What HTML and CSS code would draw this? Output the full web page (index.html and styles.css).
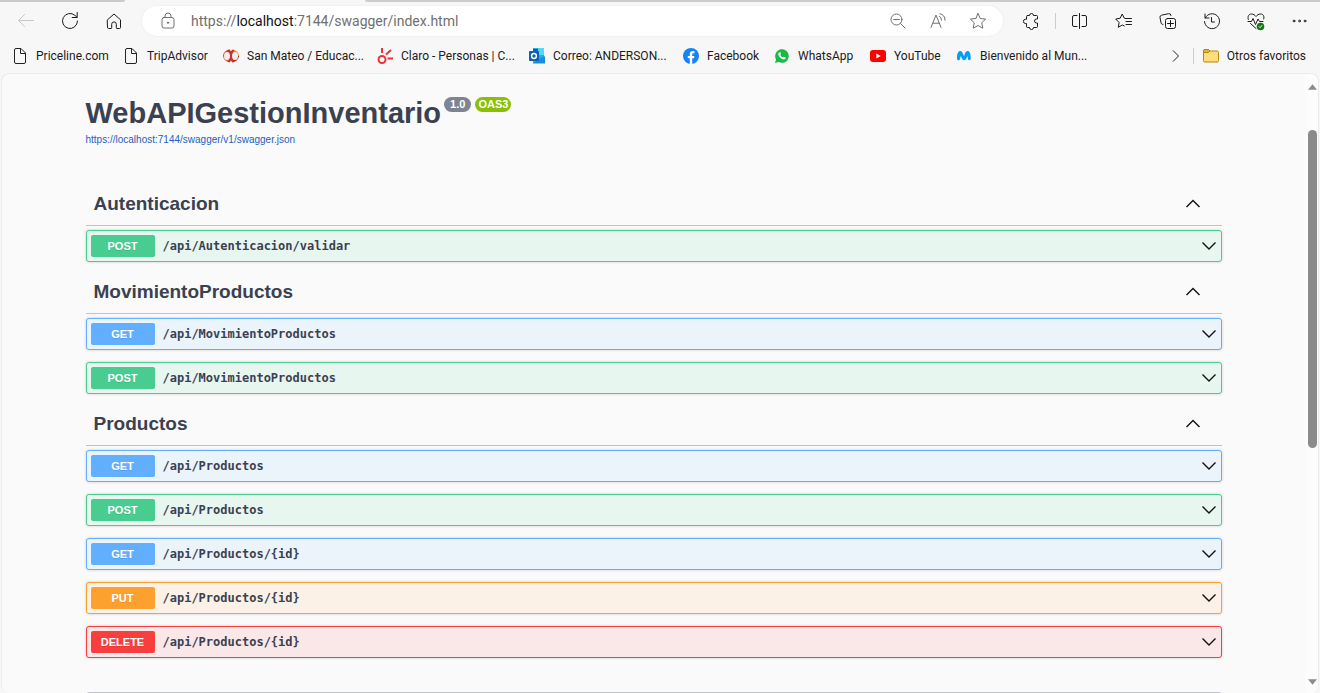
FILE: index.html
```html
<!DOCTYPE html>
<html lang="es">
<head>
<meta charset="utf-8">
<title>Swagger UI</title>
<link rel="stylesheet" href="styles.css">
</head>
<body>
<svg class="defs" aria-hidden="true">
  <symbol id="page" viewBox="0 0 16 16"><path d="M2.500 2a1.500 1.500 0 0 1 1.500-1.500h5l4.500 4.500v9a1.500 1.500 0 0 1-1.500 1.500H4a1.500 1.500 0 0 1-1.500-1.500zM8.500.5v5h5"/></symbol>
  <symbol id="up" viewBox="0 0 16 16"><path d="M1.500 11 8 4.500l6.500 6.500"/></symbol>
  <symbol id="down" viewBox="0 0 16 16"><path d="M1.500 4.500 8 11l6.500-6.500"/></symbol>
</svg>
<div class="tabs-edge"><span class="tab-strip tab-left"></span><span class="tab-strip tab-right"></span></div>
<header class="toolbar">
  <button class="tool faded" aria-label="Atrás"><svg viewBox="0 0 20 20"><path d="M17.500 9.500h-15M8.500 3.500l-6 6 6 6"/></svg></button>
  <button class="tool" aria-label="Actualizar"><svg viewBox="0 0 20 20"><path d="M17.500 10a7.500 7.500 0 1 1-2.500-5.600L17 6.300M17.200 1.500v5h-5"/></svg></button>
  <button class="tool" aria-label="Inicio"><svg viewBox="0 0 20 20"><path d="M3.500 8.800 10 3l6.500 5.800v7.700a1 1 0 0 1-1 1H13a.7.7 0 0 1-.7-.7v-3.600a2.300 2.300 0 0 0-4.600 0v3.600a.7.7 0 0 1-.7.7H4.500a1 1 0 0 1-1-1z"/></svg></button>
  <div class="address">
    <button class="lock" aria-label="Información del sitio"><svg viewBox="0 0 20 20"><rect x="4" y="6.500" width="12" height="10.500" rx="2"/><path d="M7 6.500V5a3 3 0 0 1 6 0v1.500"/><circle cx="10" cy="11.700" r=".7" fill="currentColor"/></svg></button>
    <div class="url">https://<b>localhost</b>:7144/swagger/index.html</div>
    <button class="tool" aria-label="Alejar"><svg viewBox="0 0 20 20"><circle cx="8.500" cy="8.500" r="5.500"/><path d="M12.500 12.500 17 17M5.700 8.500h5.600"/></svg></button>
    <button class="tool" aria-label="Leer en voz alta"><svg viewBox="0 0 20 20"><path d="M3 16.500 8 4l5 12.500M4.800 12.200h6.400M11.500 5.200a4.500 4.500 0 0 1 2 4M12 2.700a6.500 6.500 0 0 1 5 6.500"/></svg></button>
    <button class="tool" aria-label="Favorito"><svg viewBox="0 0 20 20"><path d="m10 2.500 2.300 5 5.400.6-4 3.700 1.100 5.400-4.800-2.700-4.800 2.700 1.100-5.400-4-3.700 5.400-.6z"/></svg></button>
  </div>
  <button class="tool" aria-label="Extensiones"><svg viewBox="0 0 20 20"><path d="M6.500 4.500h2a2 2 0 0 1 4 0h3a1 1 0 0 1 1 1V8h-1a2 2 0 0 0 0 4h1v3.500a1 1 0 0 1-1 1h-3a2 2 0 0 1-4 0h-2a1 1 0 0 1-1-1V12.500h-1a2.100 2.100 0 0 1 0-4.200h1V5.500a1 1 0 0 1 1-1z"/></svg></button>
  <span class="divider"></span>
  <button class="tool" aria-label="Pantalla dividida"><svg viewBox="0 0 20 20"><path d="M7 4.500H4A1.500 1.500 0 0 0 2.500 6v8A1.500 1.500 0 0 0 4 15.500h3M12 4.500h3A1.500 1.500 0 0 1 16.500 6v8a1.500 1.500 0 0 1-1.500 1.500h-3M9.500 2.500v15"/></svg></button>
  <button class="tool" aria-label="Favoritos"><svg viewBox="0 0 20 20"><path d="M11.500 7.500 10.300 7.200 8.200 3 6.200 7.200 1.700 8l3.400 3.500-.8 4.800 4-2.300 2 1M11.500 7.500h6M12 10.500h5.500M12 13.500h5.500"/></svg></button>
  <button class="tool" aria-label="Colecciones"><svg viewBox="0 0 20 20"><rect x="7.500" y="7.500" width="10" height="10" rx="2"/><path d="M12.500 9.500v6M9.500 12.500h6M5 13.500l-.8-.3a2 2 0 0 1-1.300-2L2 6.500A2 2 0 0 1 3.500 4.200L10.500 2.700A2 2 0 0 1 13 4.500"/></svg></button>
  <button class="tool" aria-label="Historial"><svg viewBox="0 0 20 20"><path d="M3 3v4h4M3.200 7A7.500 7.500 0 1 1 2.500 10.500M9.500 6.500v4.500h3"/></svg></button>
  <button class="tool" aria-label="Rendimiento"><svg viewBox="0 0 20 20"><path d="M2.300 8.500C1.300 5 3 3 5.500 3c2 0 3.300 1 4.500 2.500C11.200 4 12.500 3 14.500 3c2.500 0 4.200 2 3.200 5M2 10.500h3.500L7 7.500l2.500 6L12 8l1.500 2.500h3.500M4.500 12.500 10 17.500"/><circle cx="14.500" cy="15.500" r="3.800" fill="#107c10" stroke="none"/><path d="m13.200 15.700.9.900 1.700-2" stroke="#fff"/></svg></button>
  <button class="tool" aria-label="Más"><svg viewBox="0 0 20 20" fill="currentColor"><circle cx="4" cy="10" r=".9"/><circle cx="9.500" cy="10" r=".9"/><circle cx="15" cy="10" r=".9"/></svg></button>
</header>
<nav class="bookmarks">
  <div class="marks">
    <a href="#"><svg class="line"><use href="#page"/></svg><span>Priceline.com</span></a>
    <a href="#"><svg class="line"><use href="#page"/></svg><span>TripAdvisor</span></a>
    <a href="#"><svg viewBox="0 0 16 16"><path fill="#d03f35" d="M8 8V1a10 7 0 0 0-8 7z"/><path fill="#eb8a2b" d="M8 8V1a10 7 0 0 1 8 7z"/><path fill="#d96c35" d="M8 8v7a10 7 0 0 1-8-7z"/><path fill="#b92f36" d="M8 8v7a10 7 0 0 0 8-7z"/><path fill="#c8322f" d="M5 2h6L9.500 8l1.500 6H5l1.500-6z"/><ellipse cx="4" cy="8" rx="3" ry="4" fill="#f3efee"/><ellipse cx="12" cy="8" rx="3" ry="4" fill="#f3efee"/><path fill="#f7f7f7" d="M6.500 1h3L8 3.500zM6.500 15h3L8 12.500z"/></svg><span>San Mateo / Educac...</span></a>
    <a href="#"><svg viewBox="0 0 16 16" fill="none" stroke="#ef3038" stroke-width="2"><circle cx="5" cy="11.500" r="3.500"/><path d="M5 0v5M9 6.500l5-4.500M10.500 10.500H16"/></svg><span>Claro - Personas | C...</span></a>
    <a href="#"><svg viewBox="0 0 16 16"><path fill="#28a8ea" d="M4 0h11v15H4z"/><path fill="#50d9ff" d="M9 0h6v7H9z"/><path fill="#0364b8" d="M4 1h5v6H4z"/><path fill="#1490df" d="M4 15 16 8v7.500H4z"/><rect y="3" width="10" height="10" rx="1" fill="#0f5fb0"/><circle cx="5" cy="8" r="2.400" fill="none" stroke="#fff" stroke-width="1.500"/></svg><span>Correo: ANDERSON...</span></a>
    <a href="#"><svg viewBox="0 0 16 16"><circle cx="8" cy="8" r="8" fill="#1683f3"/><path fill="#fff" d="M6.800 16v-5.700H4.800V8h2V6.300c0-2 1.200-3.200 3-3.200l1.700.2v1.900h-1c-1 0-1.300.6-1.300 1.200V8h2.200l-.4 2.300H9.200V16z"/></svg><span>Facebook</span></a>
    <a href="#"><svg viewBox="0 0 16 16"><path fill="#18b944" d="M1 15l1-3.600A6.800 6.800 0 1 1 4.600 14z"/><path fill="#fff" d="M5.500 4.300c.7-.3.900 0 1.400 1.500.2.500-.6 1-.6 1.300.5 1.200 1.500 2 2.600 2.500.3.100.8-.9 1.100-.8l1.700.8c.4 1.400-1.200 2-2 1.900C7 11.200 4.600 8.500 4.300 6.600c-.1-1 .5-2 1.200-2.300z"/></svg><span>WhatsApp</span></a>
    <a href="#"><svg viewBox="0 0 16 16"><rect y="2" width="16" height="12" rx="3" fill="#f00"/><path fill="#fff" d="m6.300 5.400 4.500 2.600-4.500 2.600z"/></svg><span>YouTube</span></a>
    <a href="#"><svg viewBox="0 0 16 16"><path fill="#049cf4" d="M1 10C1 5 2.500 3 4.300 3c2 0 2.600 3 3.700 5.200C8.800 5.500 9.700 3 11.700 3c1.800 0 3 2.500 3 7 0 1.500-.5 2.300-1.300 2.300-1.200 0-1.600-1.500-2-4.500-.7 2-1.300 4.500-3.200 4.500-1.800 0-2.500-2.500-3.500-4.500-.4 2.500-.6 4.500-2.200 4.500C1.500 12.300 1 11.500 1 10z"/></svg><span>Bienvenido al Mun...</span></a>
  </div>
  <button class="more" aria-label="Más favoritos"><svg viewBox="0 0 16 16"><path d="m5 2.500 5.500 5.500L5 13.500"/></svg></button>
  <span class="divider"></span>
  <a href="#"><svg viewBox="0 0 16 16"><path fill="#ffdc7c" stroke="#b8860b" d="M.5 3A1.500 1.500 0 0 1 2 1.500h3.500L7 3h7a1.500 1.500 0 0 1 1.500 1.500v8A1.500 1.500 0 0 1 14 14H2a1.500 1.500 0 0 1-1.500-1.500z"/><path fill="#e8b32e" stroke="#b8860b" d="M.5 3A1.500 1.500 0 0 1 2 1.500h3.500L7 3 5.500 4.500h-5z"/></svg><span>Otros favoritos</span></a>
</nav>
<div class="frame">
  <main class="content">
    <div class="wrapper">
      <div class="info">
        <h1>WebAPIGestionInventario <span class="pills"><span class="pill">1.0</span><span class="pill oas">OAS3</span></span></h1>
        <a class="spec" href="#">https://localhost:7144/swagger/v1/swagger.json</a>
      </div>
      <section class="group">
        <h2><button>Autenticacion<svg><use href="#up"/></svg></button></h2>
        <div class="ops">
          <button class="op post"><span class="method">POST</span><span class="path">/api/Autenticacion/validar</span><svg><use href="#down"/></svg></button>
        </div>
      </section>
      <section class="group">
        <h2><button>MovimientoProductos<svg><use href="#up"/></svg></button></h2>
        <div class="ops">
          <button class="op get"><span class="method">GET</span><span class="path">/api/MovimientoProductos</span><svg><use href="#down"/></svg></button>
          <button class="op post"><span class="method">POST</span><span class="path">/api/MovimientoProductos</span><svg><use href="#down"/></svg></button>
        </div>
      </section>
      <section class="group">
        <h2><button>Productos<svg><use href="#up"/></svg></button></h2>
        <div class="ops">
          <button class="op get"><span class="method">GET</span><span class="path">/api/Productos</span><svg><use href="#down"/></svg></button>
          <button class="op post"><span class="method">POST</span><span class="path">/api/Productos</span><svg><use href="#down"/></svg></button>
          <button class="op get"><span class="method">GET</span><span class="path">/api/Productos/{id}</span><svg><use href="#down"/></svg></button>
          <button class="op put"><span class="method">PUT</span><span class="path">/api/Productos/{id}</span><svg><use href="#down"/></svg></button>
          <button class="op delete"><span class="method">DELETE</span><span class="path">/api/Productos/{id}</span><svg><use href="#down"/></svg></button>
        </div>
      </section>
      <section class="models"></section>
    </div>
  </main>
  <div class="scrollbar">
    <svg viewBox="0 0 10 6"><path d="M5 0l5 6H0z"/></svg>
    <div class="track"><span class="before"></span><span class="thumb"></span><span class="after"></span></div>
    <svg viewBox="0 0 10 6"><path d="M0 0h10L5 6z"/></svg>
  </div>
</div>
</body>
</html>
```
FILE: styles.css
```css
* { box-sizing: border-box; }
body {
  margin: 0;
  height: 100vh;
  display: flex;
  flex-direction: column;
  overflow: hidden;
  background: #f7f7f7;
  color: #1b1b1b;
  font-family: Roboto, "Noto Sans", sans-serif;
  font-size: 12px;
}
button {
  margin: 0;
  padding: 0;
  border: 0;
  background: none;
  color: inherit;
  font: inherit;
  text-align: left;
}
a { color: inherit; text-decoration: none; }
svg { flex: none; }
.defs { display: none; }

.tabs-edge { flex: none; display: flex; justify-content: space-between; height: 2px; }
.tab-strip { background: #cbcbcb; }
.tab-left { width: 125px; border-bottom-right-radius: 2px; }
.tab-right { width: calc(100% - 365px); border-bottom-left-radius: 2px; }

.toolbar { flex: none; display: flex; align-items: center; gap: 4px; height: 38px; padding-left: 6px; }
.tool { flex: none; display: flex; align-items: center; justify-content: center; width: 40px; height: 30px; }
.tool svg, .lock svg { width: 20px; height: 20px; }
.toolbar svg {
  fill: none;
  stroke: currentColor;
  stroke-linecap: round;
  stroke-linejoin: round;
}
.faded { color: #c8c8c8; }
.address {
  flex: 1;
  min-width: 0;
  display: flex;
  align-items: center;
  height: 30px;
  margin: 0 4px;
  padding: 0 5px 0 16px;
  border-radius: 15px;
  background: #fff;
  box-shadow: 0 0 2px rgba(0, 0, 0, .08);
  color: #707070;
}
.lock { display: flex; margin-right: 13px; }
.url { flex: 1; min-width: 0; overflow: hidden; white-space: nowrap; font-size: 14px; line-height: 20px; }
.url b { font-weight: 400; color: #111; }
.divider { flex: none; width: 1px; height: 16px; background: #cdcdcd; }

.bookmarks { flex: none; display: flex; align-items: center; height: 33px; padding: 0 14px 1px 12px; }
.marks {
  flex: 1;
  min-width: 0;
  display: grid;
  grid-template-columns: 111px 100px 154px 152px 154px 91px 96px 86px 1fr;
  overflow: hidden;
}
.bookmarks a { display: flex; align-items: center; gap: 8px; height: 24px; white-space: nowrap; }
.bookmarks svg { width: 16px; height: 16px; }
.line, .more svg { fill: none; stroke: #222; }
.more { display: flex; margin-right: 9px; }
.bookmarks .divider { margin-right: 9px; }

.frame {
  flex: 1;
  min-height: 0;
  display: flex;
  margin: 0 1px;
  border: 1px solid #ebebeb;
  border-bottom: 0;
  border-radius: 8px;
  background: #fafafa;
  overflow: hidden;
}
.content {
  flex: 1;
  min-width: 0;
  overflow: hidden;
  color: #3b4151;
  font-family: "Liberation Sans", Arial, sans-serif;
}
.wrapper { max-width: 1168px; margin: 0 auto; padding: 21px 16px 0; }
.info { padding-bottom: 34px; }
h1 { display: flex; gap: 3px; margin: 0; font-size: 29px; line-height: 36px; }
.pills { display: flex; gap: 4px; padding-top: 2px; }
.pill {
  height: 15px;
  padding: 0 6px;
  border-radius: 8px;
  background: #7d8492;
  color: #fff;
  font-size: 11px;
  line-height: 15px;
}
.oas { padding: 0 3px; background: #89bf04; }
.spec { display: block; color: #1f5fbf; font-size: 10px; line-height: 18px; }

.group { padding-bottom: 9px; }
h2 { margin: 0 0 4px; border-bottom: 1px solid #c1c2c5; }
h2 button {
  display: flex;
  align-items: center;
  justify-content: space-between;
  width: 100%;
  height: 42px;
  padding: 0 21px 0 8px;
  font-size: 19px;
}
.group svg { width: 16px; height: 16px; fill: none; stroke: #111; stroke-width: 1.4; }
.ops { display: flex; flex-direction: column; gap: 12px; }
.op {
  display: flex;
  align-items: center;
  gap: 8px;
  padding: 4px;
  border: 1px solid var(--tone);
  border-radius: 3px;
  background: var(--tint);
  box-shadow: 0 0 3px rgba(0, 0, 0, .19);
}
.method {
  width: 64px;
  border-radius: 2px;
  background: var(--tone);
  color: #fff;
  font-size: 11px;
  font-weight: 700;
  line-height: 22px;
  text-align: center;
  text-shadow: 0 1px 0 rgba(0, 0, 0, .1);
}
.path { flex: 1; font: 700 12px "DejaVu Sans Mono", monospace; }
.get { --tone: #61affe; --tint: #ebf3fb; }
.post { --tone: #49cc90; --tint: #e8f6f0; }
.put { --tone: #fca130; --tint: #fbf1e6; }
.delete { --tone: #f93e3e; --tint: #fae7e7; }
.models { height: 40px; margin-top: 25px; border: 1px solid #c1c2c5; border-radius: 3px; }

.scrollbar {
  flex: none;
  display: flex;
  flex-direction: column;
  align-items: center;
  width: 13px;
  padding: 10px 1px 8px 3px;
  background: #fcfcfc;
}
.scrollbar svg { width: 9px; height: 6px; fill: #8b8b8b; }
.track { flex: 1; display: flex; flex-direction: column; width: 9px; padding: 4px 0; }
.before { flex: 36; }
.thumb { flex: 317; border-radius: 5px; background: #8b8b8b; }
.after { flex: 226; }
```
